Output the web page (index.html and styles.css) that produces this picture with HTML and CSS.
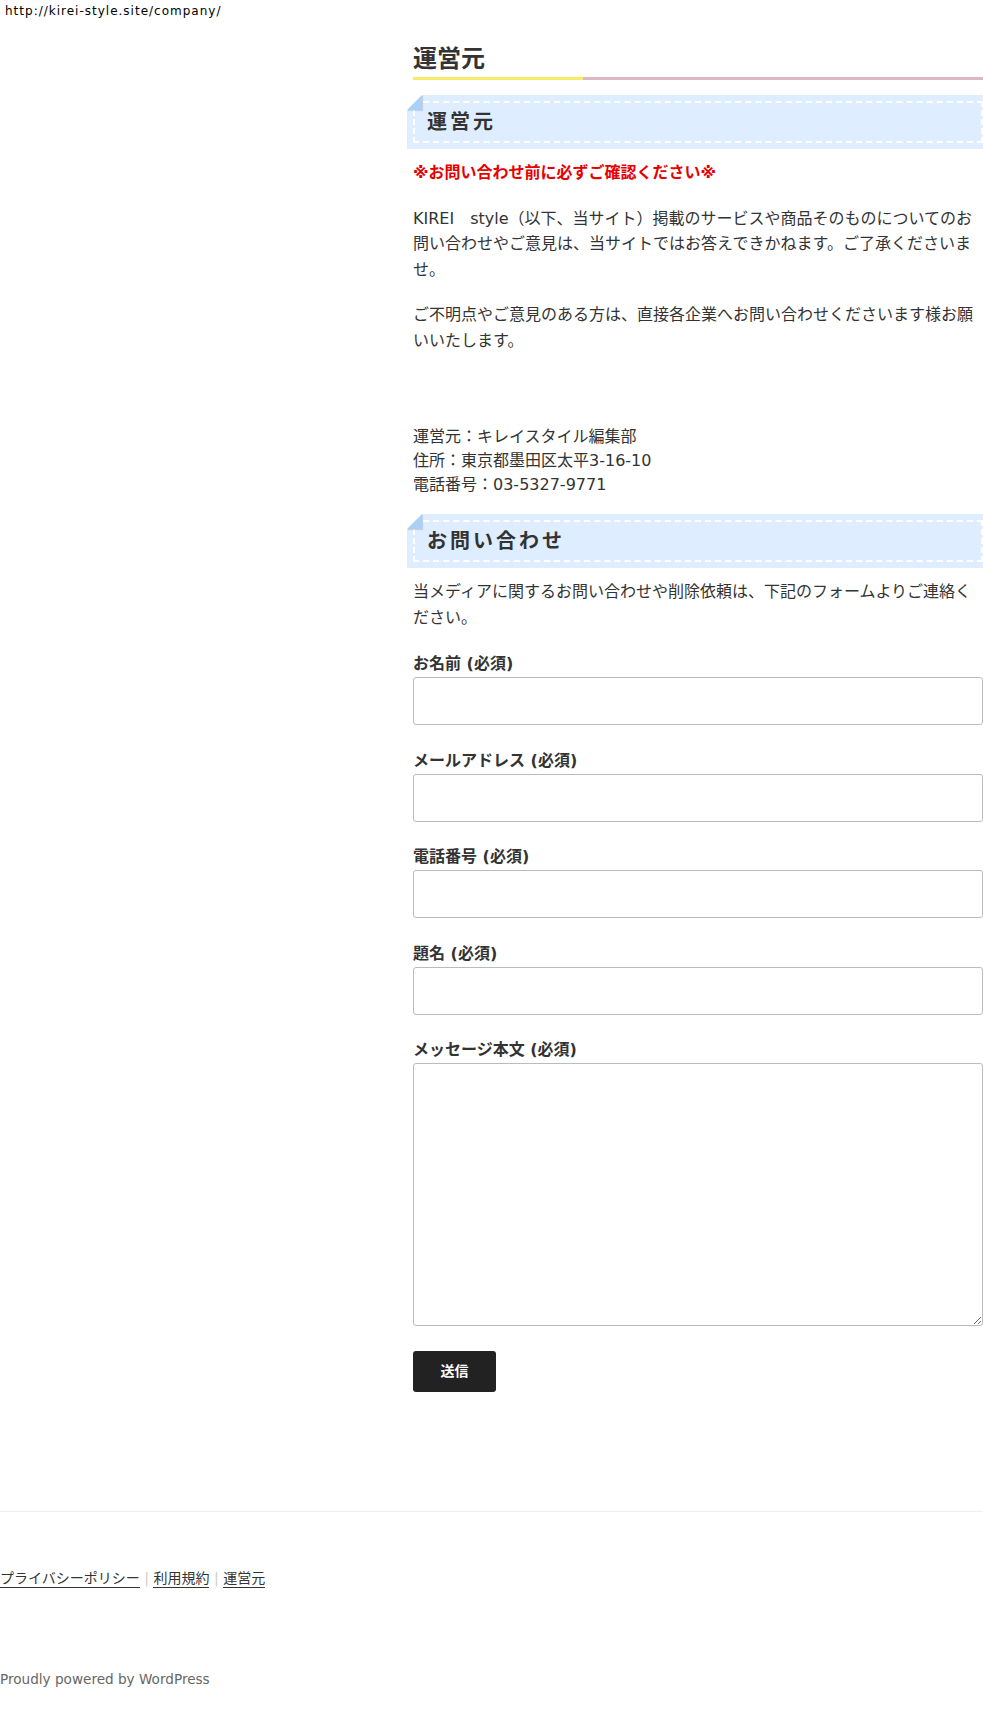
FILE: index.html
```html
<!DOCTYPE html>
<html lang="ja">

<head>
    <meta charset="UTF-8">
    <meta name="viewport" content="width=device-width, initial-scale=1.0">
    <title>運営元 | KIREI style</title>
    <link rel="stylesheet" href="styles.css">
</head>

<body>
    <div class="print-url">http://kirei-style.site/company/</div>

    <main class="content">
        <h1 class="page-title">運営元</h1>

        <h2 class="note-heading">運営元</h2>
        <p class="caution">※お問い合わせ前に必ずご確認ください※</p>
        <p>KIREI　style（以下、当サイト）掲載のサービスや商品そのものについてのお問い合わせやご意見は、当サイトではお答えできかねます。ご了承くださいませ。</p>
        <p>ご不明点やご意見のある方は、直接各企業へお問い合わせくださいます様お願いいたします。</p>
        <p>&nbsp;</p>
        <p class="address">運営元：キレイスタイル編集部<br>住所：東京都墨田区太平3-16-10<br>電話番号：03-5327-9771</p>

        <h2 class="note-heading">お問い合わせ</h2>
        <p>当メディアに関するお問い合わせや削除依頼は、下記のフォームよりご連絡ください。</p>

        <form class="contact-form" id="contactForm">
            <div class="field">
                <label for="yourName">お名前 (必須)</label>
                <input type="text" id="yourName" name="yourName" required>
            </div>
            <div class="field">
                <label for="yourEmail">メールアドレス (必須)</label>
                <input type="email" id="yourEmail" name="yourEmail" required>
            </div>
            <div class="field">
                <label for="yourTel">電話番号 (必須)</label>
                <input type="tel" id="yourTel" name="yourTel" required>
            </div>
            <div class="field">
                <label for="yourSubject">題名 (必須)</label>
                <input type="text" id="yourSubject" name="yourSubject" required>
            </div>
            <div class="field">
                <label for="yourMessage">メッセージ本文 (必須)</label>
                <textarea id="yourMessage" name="yourMessage" required></textarea>
            </div>
            <button type="submit" class="submit">送信</button>
        </form>
    </main>

    <footer class="site-footer">
        <nav class="footer-links">
            <a href="#">プライバシーポリシー</a><span class="sep">|</span><a href="#">利用規約</a><span class="sep">|</span><a href="#">運営元</a>
        </nav>
        <p class="powered">Proudly powered by WordPress</p>
    </footer>
</body>

</html>
```

FILE: styles.css
```css
body {
    margin: 0;
    padding: 0;
    font-family: "DejaVu Sans", "Noto Sans CJK JP", sans-serif;
    font-size: 16px;
    line-height: 1.6;
    color: #333;
    background-color: #fff;
}

.print-url {
    padding: 3px 5px;
    font-size: 12px;
    line-height: 16px;
    letter-spacing: 1px;
    color: #000;
}

.content {
    width: 570px;
    margin-left: 413px;
}

p {
    margin: 0 0 20px;
}

.page-title {
    margin: 19px 0 0;
    padding-bottom: 3px;
    font-size: 24px;
    line-height: 36px;
    background: linear-gradient(to right, #f7eb6b 170px, #ddb7c4 170px) left bottom / 100% 3px no-repeat;
}

/* 付箋風の見出し */
.note-heading {
    position: relative;
    margin: 21px 0 17px;
    padding: 7px 12px;
    font-size: 20px;
    line-height: 24px;
    letter-spacing: 3px;
    color: #333;
    background-color: #deedff;
    border: 2px dashed #fff;
    box-shadow: 0 0 0 6px #deedff;
}

.note-heading::after {
    content: '';
    position: absolute;
    left: -8px;
    top: -8px;
    border-width: 0 0 15px 15px;
    border-style: solid;
    border-color: #fff #fff #a9d1f7;
    box-shadow: 1px 1px 1px rgba(0, 0, 0, 0.12);
}

.caution {
    color: #e60000;
    font-weight: bold;
}

.address {
    margin-top: 26px;
    margin-bottom: 23px;
    line-height: 1.5;
}

.contact-form {
    margin-top: 23px;
}

.field {
    margin-bottom: 24.5px;
}

.field label {
    display: block;
    margin-bottom: 2px;
    font-weight: bold;
    line-height: 22px;
}

.field input,
.field textarea {
    display: block;
    box-sizing: border-box;
    width: 100%;
    height: 48px;
    margin: 0;
    padding: 8px 10px;
    border: 1px solid #bbb;
    border-radius: 3px;
    font: inherit;
    color: #333;
    background-color: #fff;
}

.field textarea {
    height: 263px;
}

.submit {
    display: block;
    width: 83px;
    height: 41px;
    padding: 0;
    border: none;
    border-radius: 3px;
    background-color: #222;
    color: #fff;
    font-family: inherit;
    font-size: 14px;
    font-weight: bold;
    line-height: 41px;
    cursor: pointer;
}

.site-footer {
    margin-top: 119px;
    padding: 56px 0 28px;
    border-top: 1px solid #eee;
    font-size: 14px;
    line-height: 21px;
}

.footer-links a {
    color: #333;
    text-decoration: none;
    border-bottom: 1px solid #333;
    padding-bottom: 1px;
}

.footer-links .sep {
    margin: 0 4.5px;
    color: #ccc;
}

.powered {
    margin: 80px 0 0;
    font-size: 13.6px;
    color: #666;
}
```
